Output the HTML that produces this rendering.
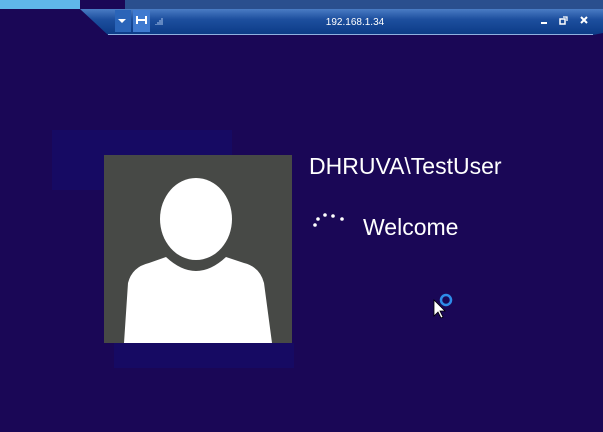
<!DOCTYPE html>
<html><head><style>
body{margin:0;width:603px;height:432px;overflow:hidden;background:#1a0756;position:relative;font-family:"Liberation Sans",sans-serif}
.a{position:absolute}
</style></head><body>
<div class="a" style="left:0;top:0;width:80px;height:9px;background:#5fb6ea"></div>
<div class="a" style="left:125px;top:0;width:478px;height:9px;background:#2a4f8e"></div>
<svg class="a" style="left:0;top:0" width="603" height="40">
<defs><linearGradient id="g" x1="0" y1="0" x2="0" y2="1"><stop offset="0" stop-color="#4a7cc4"/><stop offset="0.4" stop-color="#1d4f9e"/><stop offset="1" stop-color="#0b3a86"/></linearGradient></defs>
<polygon points="80,9 603,9 603,33 593,35 108,35" fill="url(#g)"/>
<line x1="108" y1="34.5" x2="593" y2="34.5" stroke="#8fb0e0" stroke-width="1"/>
<rect x="115" y="10" width="16" height="22" fill="#2a64b8"/>
<rect x="133" y="10" width="17" height="22" fill="#3f7ad0"/>
<polygon points="118,19 126,19 122,23" fill="#fff"/>
<path d="M137,16v8M146,16v8M137,20h9" stroke="#fff" stroke-width="2"/>
<path d="M156,25v-1M158,25v-3M160,25v-5M162,25v-7" stroke="#aac4ea" stroke-width="1"/>
<text x="355" y="25" font-size="10" fill="#fff" text-anchor="middle" font-family="Liberation Sans">192.168.1.34</text>
<rect x="541" y="22" width="6" height="2" fill="#fff"/>
<rect x="560" y="19" width="5" height="5" fill="none" stroke="#fff" stroke-width="1.5"/>
<path d="M563,17h4v4" fill="none" stroke="#fff" stroke-width="1.3"/>
<path d="M581,17l6,6M587,17l-6,6" stroke="#fff" stroke-width="2"/>
</svg>
<div class="a" style="left:52px;top:130px;width:180px;height:60px;background:#160a63"></div>
<div class="a" style="left:114px;top:343px;width:180px;height:25px;background:#160a63"></div>
<svg class="a" style="left:104px;top:155px" width="188" height="188">
<rect width="188" height="188" fill="#474946"/>
<ellipse cx="92" cy="64" rx="36" ry="41" fill="#fff"/>
<path d="M20,188 L24,128 Q28,112 45,108 L62,102 Q92,130 122,102 L140,108 Q156,112 160,128 L168,188 Z" fill="#fff"/>
</svg>
<div class="a" style="left:309px;top:153px;font-size:23px;color:#fff">DHRUVA\TestUser</div>
<svg class="a" style="left:310px;top:208px" width="40" height="22">
<g fill="#fff"><circle cx="5" cy="17" r="1.8"/><circle cx="8" cy="11" r="1.8"/><circle cx="15" cy="7" r="1.8"/><circle cx="23" cy="8" r="1.8"/><circle cx="32" cy="11" r="1.8"/></g>
</svg>
<div class="a" style="left:363px;top:214px;font-size:23px;color:#fff">Welcome</div>
<svg class="a" style="left:430px;top:290px" width="30" height="30">
<circle cx="16" cy="10" r="5" fill="none" stroke="#2e8ce8" stroke-width="2.5"/>
<path d="M4,10 L4,26 L8,22 L11,28 L13,27 L10,21 L15,21 Z" fill="#fff" stroke="#000" stroke-width="0.8"/>
</svg>
</body></html>
